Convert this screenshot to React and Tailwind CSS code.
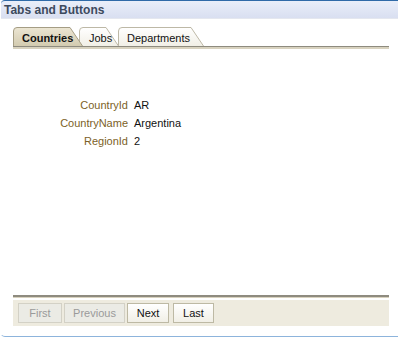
import React from "react";

function Tab({ label, selected, width, z, ml, pl }) {
  return (
    <div
      className={`relative h-[19px] flex items-center ${z} ${ml}`}
      style={{ width }}
    >
      <svg
        className="absolute inset-0"
        width={width}
        height="19"
        viewBox={`0 0 ${width} 19`}
        preserveAspectRatio="none"
      >
        <defs>
          <linearGradient id={`g-${label}`} x1="0" y1="0" x2="0" y2="1">
            {selected ? (
              <>
                <stop offset="0" stopColor="#ece6d3" />
                <stop offset="1" stopColor="#d3cbb0" />
              </>
            ) : (
              <>
                <stop offset="0" stopColor="#ffffff" />
                <stop offset="1" stopColor="#f1efe6" />
              </>
            )}
          </linearGradient>
        </defs>
        <path
          d={`M0.5 19 L0.5 4 Q0.5 0.5 4 0.5 L${width - 13} 0.5 L${width - 0.5} 19`}
          fill={`url(#g-${label})`}
          stroke={selected ? "#a59d84" : "#bdb8a6"}
          strokeWidth="1"
        />
      </svg>
      <span
        className={`relative pt-[3px] ${pl} text-[11px] leading-none text-[#111] ${
          selected ? "font-bold" : ""
        }`}
      >
        {label}
      </span>
    </div>
  );
}

export default function App() {
  return (
    <div className="w-[400px] h-[341px] bg-white font-['Liberation_Sans',Arial,sans-serif]">
      <div className="w-[398px] h-[337px] flex flex-col border-b border-l border-[#8db4dc] rounded-bl-[5px] border-l-transparent">
        <div className="h-[19px] flex items-center px-[3px] border-t border-[#2f6aa8] rounded-tl-[4px] bg-gradient-to-b from-[#e9eef9] to-[#d9dff1] border-b border-b-[#e4e7ef]">
          <span className="text-[12px] font-bold text-[#3d4a5e]">
            Tabs and Buttons
          </span>
        </div>
        <div className="flex flex-col flex-1 pl-[12px] pr-[9px]">
          <div className="flex items-end mt-[8px]">
            <Tab label="Countries" selected width={70} z="z-30" ml="" pl="pl-[9px]" />
            <Tab label="Jobs" width={40} z="z-20" ml="-ml-[4px]" pl="pl-[10px]" />
            <Tab label="Departments" width={86} z="z-10" ml="-ml-[1px]" pl="pl-[9px]" />
          </div>
          <div className="h-[1px] bg-[#8e8b7f]" />
          <div className="h-[2px] bg-[#d8d2bf]" />
          <div className="flex-1 pt-[47px]">
            <div className="grid grid-cols-[115px_1fr] gap-x-[6px] text-[11px] leading-[18px]">
              <div className="text-right text-[#7c5f27]">CountryId</div>
              <div className="text-[#111]">AR</div>
              <div className="text-right text-[#7c5f27]">CountryName</div>
              <div className="text-[#111]">Argentina</div>
              <div className="text-right text-[#7c5f27]">RegionId</div>
              <div className="text-[#111]">2</div>
            </div>
          </div>
          <div className="h-[2px] bg-[#8e8b7f]" />
          <div className="h-[1px] bg-[#d8d2bf]" />
          <div className="mt-[2px] h-[26px] bg-[#eeebdf] flex items-center gap-[2px] px-[5px] mb-[10px]">
            <button className="h-[20px] w-[44px] border border-[#d3d1c6] bg-[#ebebe5] text-[11px] text-[#9a9a9a]">
              First
            </button>
            <button className="h-[20px] w-[61px] border border-[#d3d1c6] bg-[#ebebe5] text-[11px] text-[#9a9a9a]">
              Previous
            </button>
            <button className="h-[20px] w-[42px] border border-[#bdb9a4] bg-gradient-to-b from-white to-[#f1efe6] text-[11px] text-[#111]">
              Next
            </button>
            <button className="ml-[2px] h-[20px] w-[41px] border border-[#bdb9a4] bg-gradient-to-b from-white to-[#f1efe6] text-[11px] text-[#111]">
              Last
            </button>
          </div>
        </div>
      </div>
    </div>
  );
}
